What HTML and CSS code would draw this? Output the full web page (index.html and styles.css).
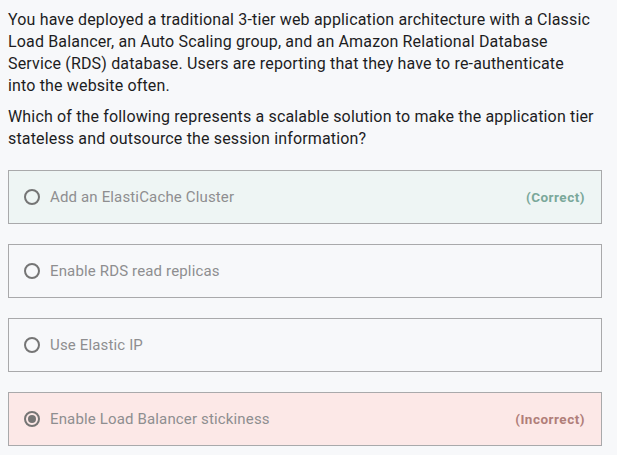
FILE: index.html
```html
<!DOCTYPE html>
<html>
<head>
<meta charset="utf-8">
<link rel="stylesheet" href="styles.css">
</head>
<body>
<div class="question">
  <p class="q">You have deployed a traditional 3-tier web application architecture with a Classic Load Balancer, an Auto Scaling group, and an Amazon Relational Database Service (RDS) database. Users are reporting that they have to re-authenticate into the website often.</p>
  <p class="q">Which of the following represents a scalable solution to make the application tier stateless and outsource the session information?</p>
</div>
<div class="options">
  <div class="opt correct"><span class="radio"></span><span class="label">Add an ElastiCache Cluster</span><span class="tag">(Correct)</span></div>
  <div class="opt"><span class="radio"></span><span class="label">Enable RDS read replicas</span></div>
  <div class="opt"><span class="radio"></span><span class="label">Use Elastic IP</span></div>
  <div class="opt incorrect"><span class="radio checked"></span><span class="label">Enable Load Balancer stickiness</span><span class="tag">(Incorrect)</span></div>
</div>
</body>
</html>
```
FILE: styles.css
```css
html, body { background: #f7f8fa; }
body {
  margin: 0;
  padding: 9px 15px 0 8px;
  font-family: Roboto, "Liberation Sans", sans-serif;
  color: #1d1d1f;
}
.question { padding-right: 8px; }
.q {
  margin: 0 0 9px 0;
  font-size: 16px;
  line-height: 22px;
  letter-spacing: 0.16px;
}
.options {
  margin-top: 20px;
  display: flex;
  flex-direction: column;
  gap: 20px;
}
.opt {
  height: 54px;
  box-sizing: border-box;
  border: 1px solid #a9a9ab;
  display: flex;
  align-items: center;
  padding: 0 16px 0 15px;
  font-size: 15px;
  letter-spacing: 0.15px;
  color: #8e8e90;
}
.opt.correct { background: #eef5f4; }
.opt.incorrect { background: #fce8e7; }
.radio {
  width: 16px;
  height: 16px;
  box-sizing: border-box;
  border: 2px solid #757575;
  border-radius: 50%;
  margin-right: 10px;
  position: relative;
  flex: none;
}
.radio.checked::after {
  content: "";
  position: absolute;
  left: 2px; top: 2px;
  width: 8px; height: 8px;
  border-radius: 50%;
  background: #757575;
}
.label { flex: 1; }
.tag {
  font-size: 13.5px;
  font-weight: bold;
  letter-spacing: 0.5px;
}
.correct .tag { color: #7aa89a; }
.incorrect .tag { color: #b07e79; }
```
